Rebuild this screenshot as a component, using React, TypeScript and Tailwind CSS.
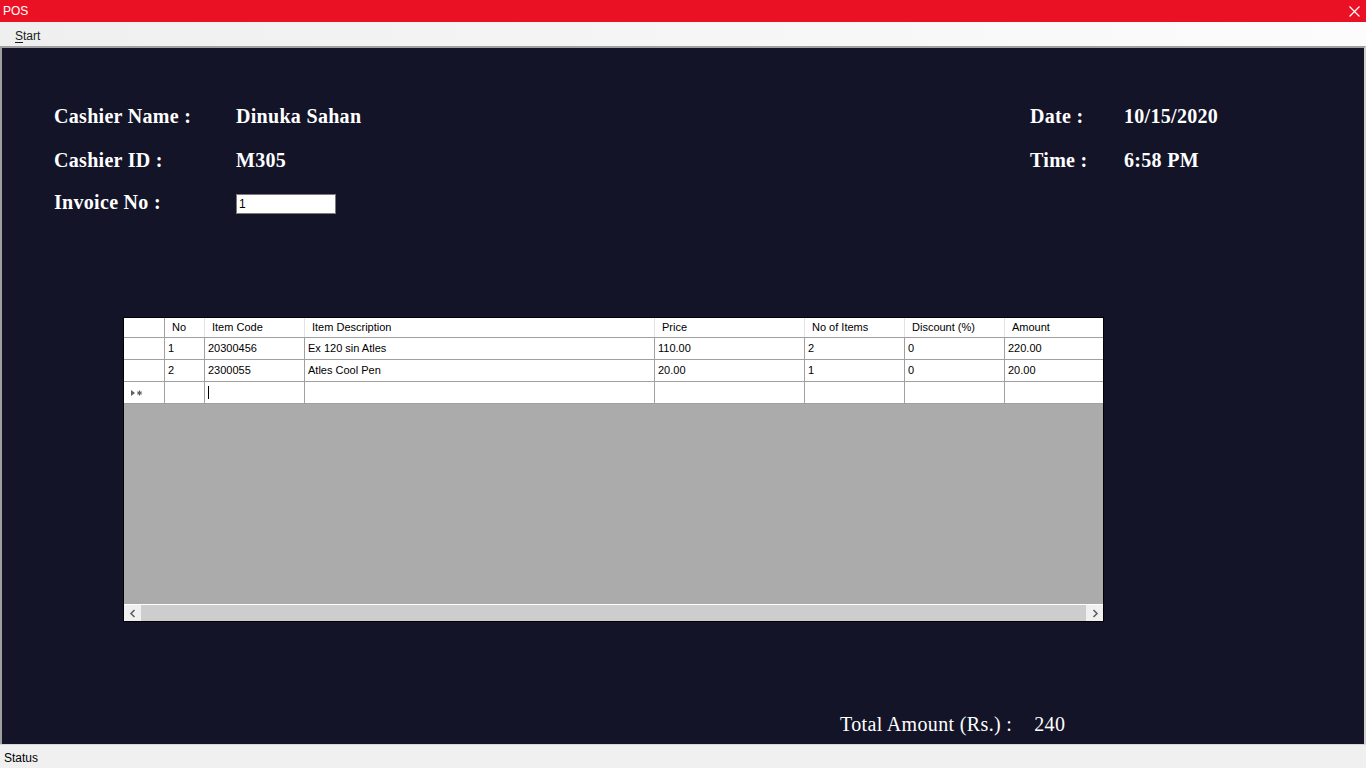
const columns = [
    { title: "No", width: "w-[40px]" },
    { title: "Item Code", width: "w-[100px]" },
    { title: "Item Description", width: "w-[350px]" },
    { title: "Price", width: "w-[150px]" },
    { title: "No of Items", width: "w-[100px]" },
    { title: "Discount (%)", width: "w-[100px]" },
    { title: "Amount", width: "w-[100px]" },
];

const rows = [
    ["1", "20300456", "Ex 120 sin Atles", "110.00", "2", "0", "220.00"],
    ["2", "2300055", "Atles Cool Pen", "20.00", "1", "0", "20.00"],
];

function InfoRow({ label, value, labelWidth }: { label: string; value: React.ReactNode; labelWidth: string }) {
    return (
        <div className="flex items-center h-[24px]">
            <div className={`${labelWidth} shrink-0`}>{label}</div>
            <div>{value}</div>
        </div>
    );
}

function NewRowMarker() {
    return (
        <svg width="14" height="8" viewBox="0 0 14 8" className="ml-[6px]">
            <path d="M1 1 L5 4 L1 7 Z" fill="#606060" />
            <path d="M9.5 1.5 V6.5 M7.3 2.8 L11.7 5.2 M11.7 2.8 L7.3 5.2" stroke="#606060" strokeWidth="1.2" />
        </svg>
    );
}

function Grid() {
    return (
        <div className="ml-[121px] w-[981px] border border-black bg-[#ababab] flex flex-col h-[305px] font-['Liberation_Sans',sans-serif] text-[11px] text-black">
            {/* header */}
            <div className="flex h-[20px] bg-white border-b border-[#a0a0a0] shrink-0 overflow-hidden">
                <div className="w-[41px] shrink-0 border-r border-[#a0a0a0]" />
                {columns.map((c) => (
                    <div key={c.title} className={`${c.width} shrink-0 border-r border-[#e3e3e3] pl-[7px] flex items-center`}>
                        {c.title}
                    </div>
                ))}
            </div>
            {rows.map((r, i) => (
                <div key={i} className="flex h-[22px] bg-white border-b border-[#a0a0a0] shrink-0 overflow-hidden">
                    <div className="w-[41px] shrink-0 border-r border-[#a0a0a0]" />
                    {r.map((cell, j) => (
                        <div key={j} className={`${columns[j].width} shrink-0 border-r border-[#a0a0a0] pl-[3px] flex items-center`}>
                            {cell}
                        </div>
                    ))}
                </div>
            ))}
            <div className="flex h-[22px] bg-white border-b border-[#a0a0a0] shrink-0 overflow-hidden">
                <div className="w-[41px] shrink-0 border-r border-[#a0a0a0] flex items-center">
                    <NewRowMarker />
                </div>
                {columns.map((c, j) => (
                    <div key={j} className={`${c.width} shrink-0 border-r border-[#a0a0a0] pl-[3px] flex items-center`}>
                        {j === 1 && <span className="w-px h-[13px] bg-black" />}
                    </div>
                ))}
            </div>
            <div className="flex-1" />
            {/* horizontal scrollbar */}
            <div className="flex h-[17px] border-t border-white bg-[#f0f0f0] shrink-0">
                <div className="w-[17px] flex items-center justify-center">
                    <svg width="8" height="9" viewBox="0 0 8 9">
                        <path d="M5.5 1 L2 4.5 L5.5 8" stroke="#606060" strokeWidth="1.6" fill="none" />
                    </svg>
                </div>
                <div className="flex-1 bg-[#cdcdcd]" />
                <div className="w-[17px] flex items-center justify-center">
                    <svg width="8" height="9" viewBox="0 0 8 9">
                        <path d="M2.5 1 L6 4.5 L2.5 8" stroke="#606060" strokeWidth="1.6" fill="none" />
                    </svg>
                </div>
            </div>
        </div>
    );
}

export default function App() {
    return (
        <div className="w-[1366px] h-[768px] flex flex-col overflow-hidden bg-[#f0f0f0] font-['Liberation_Sans',sans-serif]">
            <div className="h-[22px] bg-[#eb1125] flex items-center justify-between shrink-0">
                <span className="pl-[3px] text-white text-[12px]">POS</span>
                <svg width="11" height="11" viewBox="0 0 11 11" className="mr-[6px]">
                    <path d="M0.5 0.5 L10.5 10.5 M10.5 0.5 L0.5 10.5" stroke="white" strokeWidth="1.2" />
                </svg>
            </div>
            <div className="h-[24px] bg-gradient-to-r from-[#efefef] to-[#fcfcfc] flex items-center pt-[3px] shrink-0">
                <span className="ml-[15px] text-[12px] text-[#1a1a1a]">
                    <span className="underline underline-offset-2">S</span>tart
                </span>
            </div>
            <div className="flex-1 bg-[#131428] border-t-2 border-l-2 border-r-2 border-t-[#a0a0a0] border-l-[#a0a0a0] border-r-[#d0d0d0] flex flex-col text-white font-['Liberation_Serif',serif]">
                <div className="flex pt-[56px] pl-[52px] font-bold text-[20px] tracking-[0.3px]">
                    <div className="w-[976px] shrink-0 flex flex-col gap-[20px]">
                        <InfoRow label="Cashier Name :" value="Dinuka Sahan" labelWidth="w-[182px]" />
                        <InfoRow label="Cashier ID :" value="M305" labelWidth="w-[182px]" />
                        <div className="-mt-[2px]">
                            <InfoRow
                                label="Invoice No :"
                                labelWidth="w-[182px]"
                                value={
                                    <div className="w-[100px] h-[20px] bg-white border border-[#7a7a7a] mt-[4px] pl-[2px] flex items-center font-['Liberation_Sans',sans-serif] font-normal tracking-normal text-[12px] text-black">
                                        1
                                    </div>
                                }
                            />
                        </div>
                    </div>
                    <div className="flex flex-col gap-[20px]">
                        <InfoRow label="Date :" value="10/15/2020" labelWidth="w-[94px]" />
                        <InfoRow label="Time :" value="6:58 PM" labelWidth="w-[94px]" />
                    </div>
                </div>
                <div className="mt-[103px]">
                    <Grid />
                </div>
                <div className="mt-[90px] flex items-center h-[24px] pl-[838px] text-[20px] tracking-[0.35px]">
                    <span>Total Amount (Rs.) :</span>
                    <span className="ml-[22px]">240</span>
                </div>
            </div>
            <div className="h-[24px] border-t border-[#d7d7d7] bg-[#f0f0f0] flex items-center pt-[2px] shrink-0">
                <span className="pl-[4px] text-[12px] text-black">Status</span>
            </div>
        </div>
    );
}
